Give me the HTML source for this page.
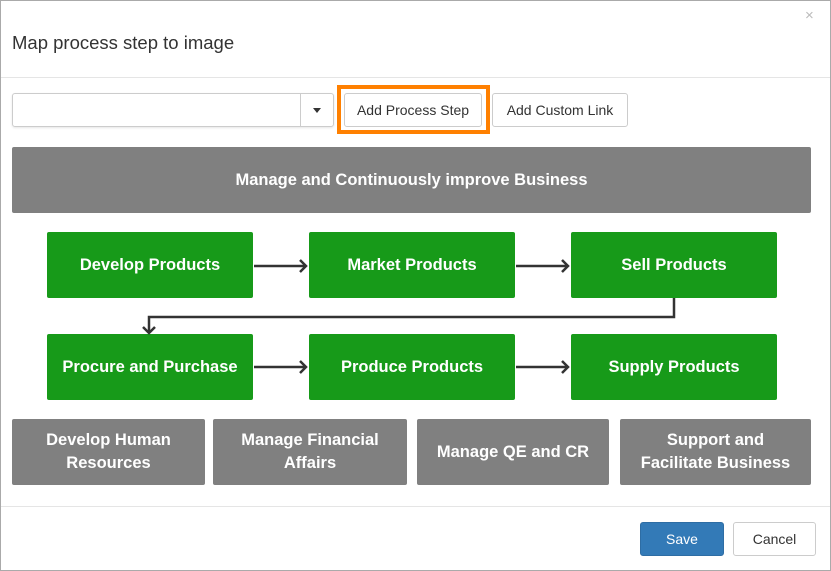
<!DOCTYPE html><html><head><style>
body{margin:0;width:831px;height:571px;position:relative;font-family:"Liberation Sans",sans-serif;background:#fff;overflow:hidden}
.a{position:absolute;box-sizing:border-box}
.b{display:flex;align-items:center;justify-content:center;text-align:center;color:#fff;font-weight:bold;font-size:16.5px;line-height:23px;border-radius:2px}
.g{background:#179a19}.k{background:#808080}
.btn{border:1px solid #ccc;border-radius:3px;background:#fff;color:#333;font-size:14px;display:flex;align-items:center;justify-content:center}
</style></head><body>
<div class="a" style="left:0;top:0;width:831px;height:571px;border:1px solid #aaa"></div>
<div class="a" style="left:805px;top:7px;color:#bbb;font-size:15px">×</div>
<div class="a" style="left:12px;top:32px;font-size:18.5px;color:#333">Map process step to image</div>
<div class="a" style="left:1px;top:77px;width:829px;height:1px;background:#e5e5e5"></div>
<div class="a" style="left:12px;top:93px;width:322px;height:34px;border:1px solid #ccc;border-radius:3px;box-shadow:0 1px 2px rgba(0,0,0,.1)"></div>
<div class="a" style="left:300px;top:94px;width:1px;height:32px;background:#ccc"></div>
<div class="a" style="left:313px;top:108px;border-left:4px solid transparent;border-right:4px solid transparent;border-top:5px solid #333"></div>
<div class="a" style="left:337px;top:85px;width:153px;height:49px;border:4px solid #ff8000"></div>
<div class="a btn" style="left:344px;top:93px;width:138px;height:34px">Add Process Step</div>
<div class="a btn" style="left:492px;top:93px;width:136px;height:34px">Add Custom Link</div>
<div class="a b k" style="left:12px;top:147px;width:799px;height:66px">Manage and Continuously improve Business</div>
<div class="a b g" style="left:47px;top:232px;width:206px;height:66px">Develop Products</div>
<div class="a b g" style="left:309px;top:232px;width:206px;height:66px">Market Products</div>
<div class="a b g" style="left:571px;top:232px;width:206px;height:66px">Sell Products</div>
<div class="a b g" style="left:47px;top:334px;width:206px;height:66px">Procure and Purchase</div>
<div class="a b g" style="left:309px;top:334px;width:206px;height:66px">Produce Products</div>
<div class="a b g" style="left:571px;top:334px;width:206px;height:66px">Supply Products</div>
<svg class="a" style="left:0;top:0" width="831" height="571"><g stroke="#333" stroke-width="2.5" fill="none">
<path d="M254 266H306M300 260l6 6-6 6"/><path d="M516 266H568M562 260l6 6-6 6"/>
<path d="M254 367H306M300 361l6 6-6 6"/><path d="M516 367H568M562 361l6 6-6 6"/>
<path d="M674 298V317H149V333M143 327l6 6 6-6"/></g></svg>
<div class="a b k" style="left:12px;top:419px;width:193px;height:66px">Develop Human<br>Resources</div>
<div class="a b k" style="left:213px;top:419px;width:194px;height:66px">Manage Financial<br>Affairs</div>
<div class="a b k" style="left:417px;top:419px;width:192px;height:66px">Manage QE and CR</div>
<div class="a b k" style="left:620px;top:419px;width:191px;height:66px">Support and<br>Facilitate Business</div>
<div class="a" style="left:1px;top:506px;width:829px;height:1px;background:#e5e5e5"></div>
<div class="a btn" style="left:640px;top:522px;width:84px;height:34px;background:#337ab7;border-color:#2e6da4;color:#fff">Save</div>
<div class="a btn" style="left:733px;top:522px;width:83px;height:34px">Cancel</div>
</body></html>
